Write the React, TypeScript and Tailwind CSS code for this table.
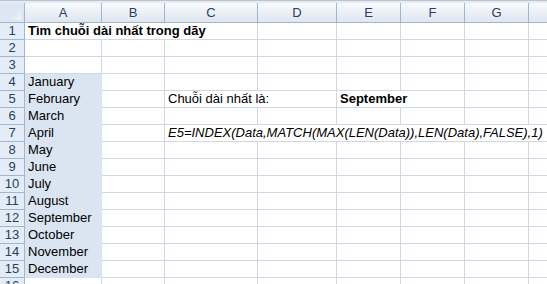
import React from 'react';

type Cell = { text: string; span: number; style?: string };

const COLUMNS = ['A', 'B', 'C', 'D', 'E', 'F', 'G', 'H'];
const MONTHS = [
  'January', 'February', 'March', 'April', 'May', 'June',
  'July', 'August', 'September', 'October', 'November', 'December',
];

// cells that hold text, keyed by row then column index (A = 0)
const CONTENT: Record<number, Record<number, Cell>> = {
  1: { 0: { text: 'Tìm chuỗi dài nhất trong dãy', span: 3, style: 'font-bold' } },
  5: {
    2: { text: 'Chuỗi dài nhất là:', span: 2 },
    4: { text: 'September', span: 2, style: 'font-bold' },
  },
  7: {
    2: {
      text: 'E5=INDEX(Data,MATCH(MAX(LEN(Data)),LEN(Data),FALSE),1)',
      span: 6,
      style: 'italic',
    },
  },
};

const GRID = 'grid grid-cols-[25px_77px_63px_93px_79px_64px_64px_64px_64px]';

const spanClass: Record<number, string> = {
  1: 'col-span-1',
  2: 'col-span-2',
  3: 'col-span-3',
  6: 'col-span-6',
};

function SheetRow({ n }: { n: number }) {
  const row = CONTENT[n] ?? {};
  const cells: React.ReactNode[] = [];
  let c = 0;
  while (c < COLUMNS.length) {
    const month = c === 0 && n >= 4 && n <= 15 ? MONTHS[n - 4] : null;
    const cell: Cell = row[c] ?? { text: month ?? '', span: 1 };
    const filled = month !== null;
    cells.push(
      <div
        key={c}
        className={`${spanClass[cell.span]} h-[17px] overflow-visible whitespace-nowrap border-b border-r pl-[3px] leading-[16px] ${
          filled ? 'border-[#dbe5f1] bg-[#dbe5f1]' : 'border-[#d0d7e5] bg-white'
        } ${cell.style ?? ''}`}>
        {cell.text}
      </div>,
    );
    c += cell.span;
  }

  return (
    <div className={GRID}>
      <div className="h-[17px] border-b border-r border-[#9eb6ce] bg-[#e4ecf7] text-center leading-[16px] text-[#27415f]">
        {n}
      </div>
      {cells}
    </div>
  );
}

export default function App() {
  const rows = Array.from({ length: 16 }, (_, i) => i + 1);

  return (
    <div
      className="h-[284px] w-[547px] overflow-hidden bg-white text-[13px] text-black"
      style={{ fontFamily: '"Liberation Sans", Arial, sans-serif' }}>
      {/* window edge above the headers */}
      <div className="h-[3px] border-t border-[#b9c4d2] bg-[#e6ebf2]" />

      {/* column headers */}
      <div className={GRID}>
        <div className="relative h-[20px] border-b border-r border-[#9eb6ce] bg-[#dce6f4]">
          <svg className="absolute left-0 top-0" width="24" height="19" viewBox="0 0 24 19">
            <defs>
              <linearGradient id="corner" x1="0" y1="0" x2="1" y2="1">
                <stop offset="0" stopColor="#c7d3e4" />
                <stop offset="1" stopColor="#f4f7fb" />
              </linearGradient>
            </defs>
            <polygon points="21,4 21,17 8,17" fill="url(#corner)" />
          </svg>
        </div>
        {COLUMNS.map((col) => (
          <div
            key={col}
            className="h-[20px] border-b border-r border-[#9eb6ce] bg-gradient-to-b from-[#f8fafd] to-[#dfe6f0] text-center leading-[19px] text-[#27415f]">
            {col}
          </div>
        ))}
      </div>

      {rows.map((n) => (
        <SheetRow key={n} n={n} />
      ))}
    </div>
  );
}
